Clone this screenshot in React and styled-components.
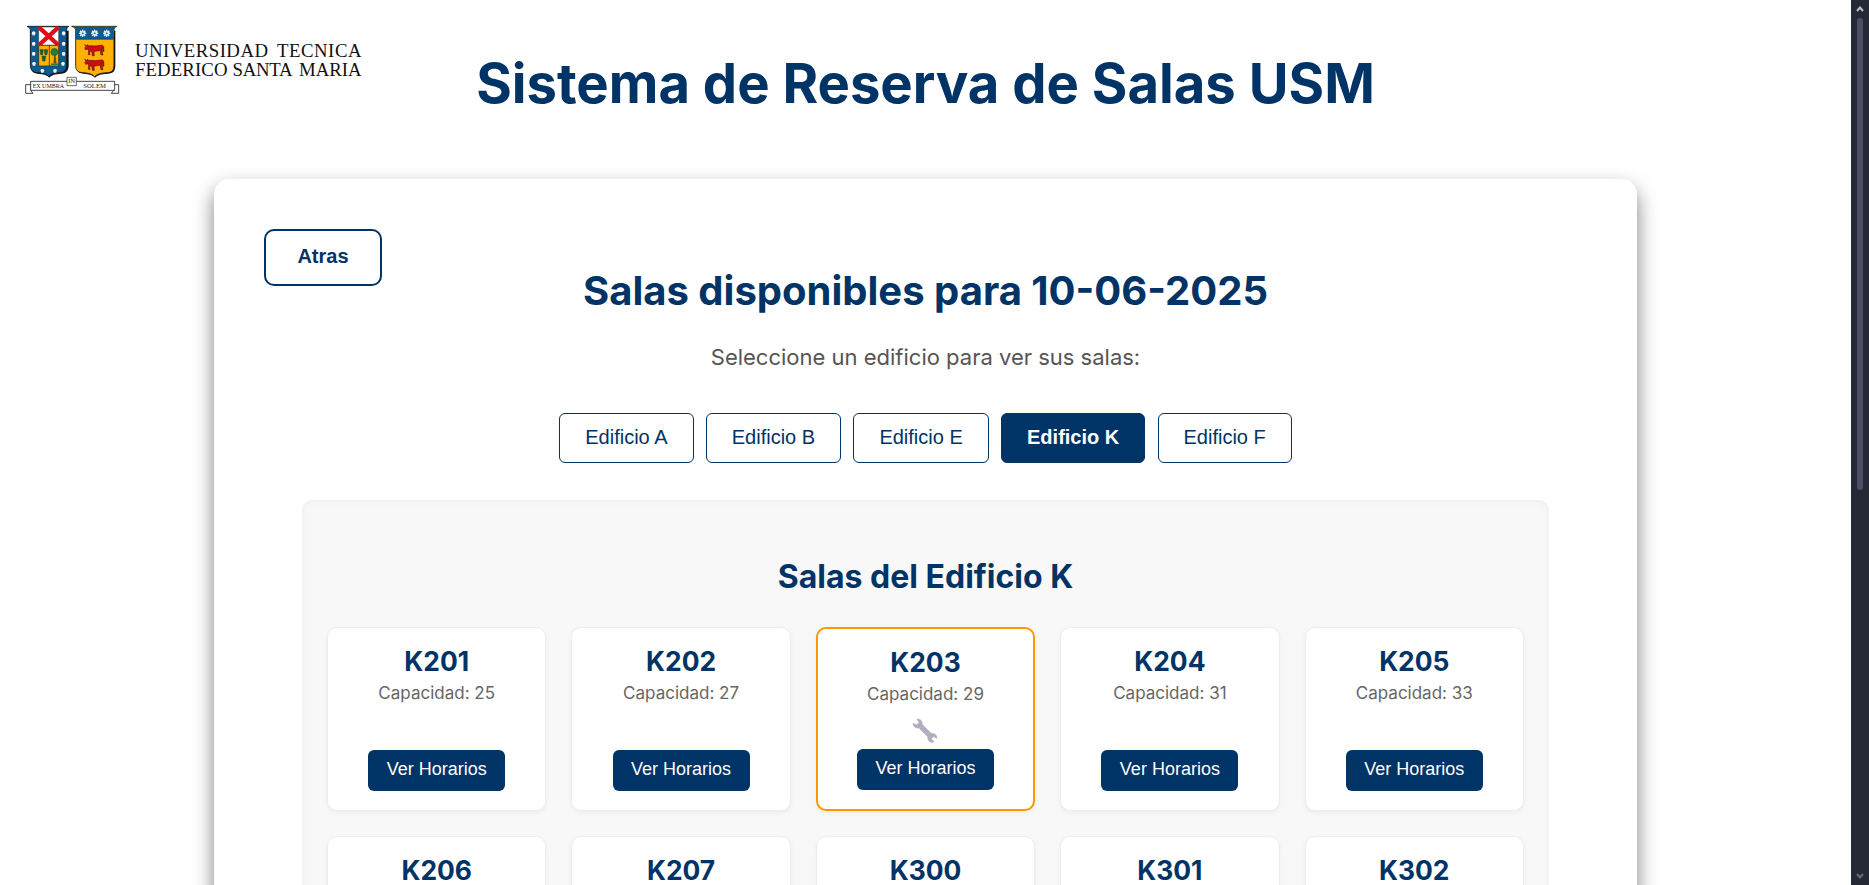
import React from 'react';
import styled, { createGlobalStyle, css } from 'styled-components';

const NAVY = '#003366';

const GlobalStyle = createGlobalStyle`
  * { box-sizing: border-box; }
  html, body { margin: 0; padding: 0; background: #fff; }
  body { height: 885px; overflow: hidden; font-family: Inter, 'Liberation Sans', sans-serif; }
  h1, h2, h3, h4, p { margin: 0; }
`;

const Screen = styled.div`
  display: flex;
  width: 100%;
  height: 885px;
  overflow: hidden;
`;

const Page = styled.div`
  flex: 1;
  min-width: 0;
  overflow: hidden;
`;

const Header = styled.header`
  display: grid;
  grid-template-columns: 1fr auto 1fr;
  height: 179px;
`;

const LogoSvg = styled.svg`
  display: block;
  margin: 24px 0 0 24px;
`;

const Title = styled.h1`
  margin-top: 49px;
  font-size: 54.4px;
  line-height: 68px;
  font-weight: 700;
  color: ${NAVY};
  white-space: nowrap;
`;

const Card = styled.main`
  width: 1423px;
  height: 900px;
  margin: 0 auto;
  padding: 50px 0 0;
  background: #fff;
  border-radius: 15px;
  box-shadow: 0 10px 20px rgba(0, 0, 0, 0.5);
`;

const CardTop = styled.div`
  display: grid;
  grid-template-columns: 1fr auto 1fr;
  height: 115px;
  padding: 0 50px;
`;

const BackButton = styled.button`
  width: 118px;
  height: 57px;
  padding: 0 0 2px;
  border: 2px solid ${NAVY};
  border-radius: 10px;
  background: #fff;
  color: ${NAVY};
  font: bold 20px 'Liberation Sans', Arial, sans-serif;
`;

const Heading = styled.h2`
  margin-top: 38px;
  font-size: 40px;
  line-height: 48px;
  font-weight: 700;
  color: ${NAVY};
  white-space: nowrap;
`;

const Hint = styled.p`
  font-size: 22px;
  line-height: 27px;
  color: #555;
  text-align: center;
`;

const Buildings = styled.nav`
  display: flex;
  justify-content: center;
  gap: 12.25px;
  margin: 42px 0 37px;
`;

const BuildingButton = styled.button`
  height: 50px;
  padding: 0 25px 2px;
  border: 1px solid ${NAVY};
  border-radius: 6px;
  background: ${p => (p.$active ? NAVY : '#fff')};
  color: ${p => (p.$active ? '#fff' : NAVY)};
  font: ${p => (p.$active ? 'bold' : 'normal')} 20px 'Liberation Sans', Arial, sans-serif;
  white-space: nowrap;
`;

const Panel = styled.section`
  width: 1247px;
  height: 600px;
  margin: 0 auto;
  padding: 57px 25px 0;
  background: #f8f8f8;
  border-radius: 10px;
  box-shadow: inset 0 0 8px rgba(0, 0, 0, 0.05);
`;

const PanelTitle = styled.h3`
  margin-bottom: 31px;
  font-size: 32px;
  line-height: 39px;
  font-weight: 700;
  color: ${NAVY};
  text-align: center;
`;

const RoomGrid = styled.div`
  display: grid;
  grid-template-columns: repeat(5, 1fr);
  grid-auto-rows: 184px;
  gap: 25px;
`;

const RoomCard = styled.article`
  display: flex;
  flex-direction: column;
  align-items: center;
  padding: 17px 0 19px;
  border: 1px solid #eee;
  border-radius: 10px;
  background: #fff;
  box-shadow: 0 2px 5px rgba(0, 0, 0, 0.05);
  ${p => p.$maintenance && css`border: 2px solid #ff9800;`}
`;

const RoomName = styled.h4`
  font-size: 26.4px;
  line-height: 32px;
  font-weight: 700;
  color: ${NAVY};
`;

const Capacity = styled.p`
  margin-top: 5px;
  font-size: 17px;
  line-height: 22px;
  color: #666;
`;

const WrenchSvg = styled.svg`
  display: block;
  margin-top: 13px;
`;

const ScheduleButton = styled.button`
  width: 137px;
  height: 41px;
  margin-top: auto;
  padding: 0 0 2px;
  border: 0;
  border-radius: 6px;
  background: ${NAVY};
  color: #fff;
  font: 18px 'Liberation Sans', Arial, sans-serif;
  white-space: nowrap;
`;

const ScrollTrack = styled.aside`
  display: flex;
  flex-direction: column;
  align-items: center;
  width: 18px;
  height: 885px;
  padding: 6px 0;
  background: #252936;
`;

const ScrollThumb = styled.div`
  width: 6px;
  height: 472px;
  margin: 6px 0 auto;
  border-radius: 3px;
  background: #4c4d66;
`;

const Shell = ({ x, y }) => (
  <g>
    <circle cx={x} cy={y} r="6.2" fill="#123" />
    <circle cx={x} cy={y - 0.5} r="5.6" fill="#f1f6fa" />
    <path d={`M${x - 4} ${y + 5}h8`} stroke="#cfdbe4" strokeWidth="3" />
  </g>
);

const Star = ({ x, y }) => (
  <g stroke="#f4f8fb" strokeWidth="4.5" strokeLinecap="round">
    <path d={`M${x - 9} ${y}h18M${x} ${y - 9}v18M${x - 6.5} ${y - 6.5}l13 13M${x + 6.5} ${y - 6.5}l-13 13`} />
    <circle cx={x} cy={y} r="2.2" fill="#0b5b8f" stroke="#0b5b8f" strokeWidth="1" />
  </g>
);

const Bull = ({ y }) => (
  <path
    transform={`translate(207 ${y})`}
    d="M2 1l5 3 5-3 1 4 8-1 12 1 18-2c5-1 7 1 8 4l1 14-3 1-1-12-2 4 1 10 2 8h-6l-2-11-3-2-14 2-2 4 1 9h-6l-1-11-5-3-2 5 1 6h-5l1-11-2-6-7 2-3-5 4-4z"
    fill="#d20a11"
    stroke="#3a0a05"
    strokeWidth="1.6"
  />
);

const Logo = () => (
  <LogoSvg width="340" height="74" viewBox="0 0 340 74">
    <g transform="translate(-9 -9) scale(.33333)">
      <path d="M47 47h114v103c0 16-7 25-22 26-20 1-29 4-36 12-7-8-16-11-36-12-13-1-20-9-20-25z" fill="#151515" />
      <path d="M36 34h125c-4 3-6 6-6 10v105c0 16-6 23-20 24-19 1-28 4-34 12-7-8-16-11-34-12-14-1-21-8-21-24V44c-1-5-5-8-10-10z" fill="#0b5b8f" stroke="#111" strokeWidth="2.5" />
      <path d="M71 36h60v55H71z" fill="#fff" stroke="#333" strokeWidth="1.5" />
      <path d="M72 37l58 53M130 37L72 90" stroke="#e20d19" strokeWidth="13" />
      <path d="M71 91h60v62H71z" fill="#fdb005" stroke="#222" strokeWidth="2" />
      <path d="M103 91v62" stroke="#111" strokeWidth="2" />
      <path d="M75 104h10l-2 15h-6zM88 104h10l-2 15h-6zM81 123h11l-2 15h-7z" fill="#17652c" stroke="#123c1d" strokeWidth="1.5" />
      <path d="M118 118l-2 27h8l-3-27" fill="#7a4b14" stroke="#3d4a12" />
      <circle cx="118" cy="111" r="10.5" fill="#16853b" stroke="#123c1d" strokeWidth="1.5" />
      <path d="M108 148h21" stroke="#16853b" strokeWidth="5" />
      <Shell x={56} y={55} /><Shell x={56} y={86} /><Shell x={56} y={116} /><Shell x={57} y={146} />
      <Shell x={146} y={55} /><Shell x={146} y={86} /><Shell x={146} y={116} /><Shell x={144} y={146} />
      <Shell x={82} y={167} /><Shell x={120} y={167} />

      <path d="M183 47h118v105c0 16-7 23-22 24-20 1-31 4-39 12-7-8-17-11-35-12-15-1-22-9-22-25z" fill="#151515" />
      <path d="M170 34h135c-5 2-8 6-8 11v105c0 16-6 22-20 23-20 1-30 4-38 12-7-8-18-11-36-12-15-1-21-7-21-23V46c0-6-5-10-12-12z" fill="#fdb005" stroke="#111" strokeWidth="2.5" />
      <path d="M173 35h129c-4 2-6 6-6 10v28H183V46c0-5-4-9-10-11z" fill="#0b5b8f" />
      <path d="M183 73h113" stroke="#222" strokeWidth="1.5" />
      <Star x={203} y={55} /><Star x={239} y={55} /><Star x={275} y={55} />
      <Bull y={88} /><Bull y={132} />

      <path d="M48 209H32v26h22l-6-8zM295 209h16v26h-22l6-8z" fill="#fff" stroke="#222" strokeWidth="2.5" />
      <path d="M47 199h252v27H47z" fill="#fff" stroke="#222" strokeWidth="2.5" />
      <path d="M156 187h28v25h-28z" fill="#fff" stroke="#222" strokeWidth="2" />
      <g fontFamily="'Liberation Serif', 'Times New Roman', serif" fill="#222">
        <text x="53" y="218" fontSize="19" textLength="94" lengthAdjust="spacingAndGlyphs">EX UMBRA</text>
        <text x="160" y="205" fontSize="16" textLength="20" lengthAdjust="spacingAndGlyphs">IN</text>
        <text x="205" y="218" fontSize="19" textLength="68" lengthAdjust="spacingAndGlyphs">SOLEM</text>
      </g>
    </g>
    <g fontFamily="'Liberation Serif', 'Times New Roman', serif" fontSize="18.8" fill="#111">
      <text x="111" y="33" textLength="133">UNIVERSIDAD</text>
      <text x="253" y="33" textLength="84.500">TECNICA</text>
      <text x="111" y="52" textLength="92.500">FEDERICO</text>
      <text x="208.500" y="52" textLength="60">SANTA</text>
      <text x="275" y="52" textLength="62.500">MARIA</text>
    </g>
  </LogoSvg>
);

const Wrench = () => (
  <WrenchSvg width="26" height="26" viewBox="0 0 26 26">
    <path
      d="M5 1.3C8 .5 10.700 3.200 10 6.300L19.200 15.600C22.300 14.700 25 17.100 24.700 20.200L21.700 18.500 19 20.800 22 23.800C19 25.500 15.200 22.700 16 19L6.700 9.800C3.700 10.600 1 8.500 1.200 5.300L4.500 7 7.300 4.500z"
      fill="#b4acbc"
      stroke="#b4acbc"
      strokeWidth="0.8"
      strokeLinejoin="round"
    />
  </WrenchSvg>
);

const buildings = ['A', 'B', 'E', 'K', 'F'];

const rooms = [
  { name: 'K201', capacity: 25 },
  { name: 'K202', capacity: 27 },
  { name: 'K203', capacity: 29, maintenance: true },
  { name: 'K204', capacity: 31 },
  { name: 'K205', capacity: 33 },
  { name: 'K206' },
  { name: 'K207' },
  { name: 'K300' },
  { name: 'K301' },
  { name: 'K302' },
];

export default function App() {
  return (
    <Screen>
      <GlobalStyle />
      <Page>
        <Header>
          <Logo />
          <Title>Sistema de Reserva de Salas USM</Title>
        </Header>
        <Card>
          <CardTop>
            <BackButton>Atras</BackButton>
            <Heading>Salas disponibles para 10-06-2025</Heading>
          </CardTop>
          <Hint>Seleccione un edificio para ver sus salas:</Hint>
          <Buildings>
            {buildings.map(b => (
              <BuildingButton key={b} $active={b === 'K'}>Edificio {b}</BuildingButton>
            ))}
          </Buildings>
          <Panel>
            <PanelTitle>Salas del Edificio K</PanelTitle>
            <RoomGrid>
              {rooms.map(room => (
                <RoomCard key={room.name} $maintenance={room.maintenance}>
                  <RoomName>{room.name}</RoomName>
                  {room.capacity && <Capacity>Capacidad: {room.capacity}</Capacity>}
                  {room.maintenance && <Wrench />}
                  {room.capacity && <ScheduleButton>Ver Horarios</ScheduleButton>}
                </RoomCard>
              ))}
            </RoomGrid>
          </Panel>
        </Card>
      </Page>
      <ScrollTrack>
        <svg width="8" height="6" viewBox="0 0 8 6"><path d="M1 5l3-3.500L7 5" fill="none" stroke="#c0c0c0" strokeWidth="2" /></svg>
        <ScrollThumb />
        <svg width="8" height="6" viewBox="0 0 8 6"><path d="M1 1l3 3.500L7 1" fill="none" stroke="#6b6b6b" strokeWidth="2" /></svg>
      </ScrollTrack>
    </Screen>
  );
}
